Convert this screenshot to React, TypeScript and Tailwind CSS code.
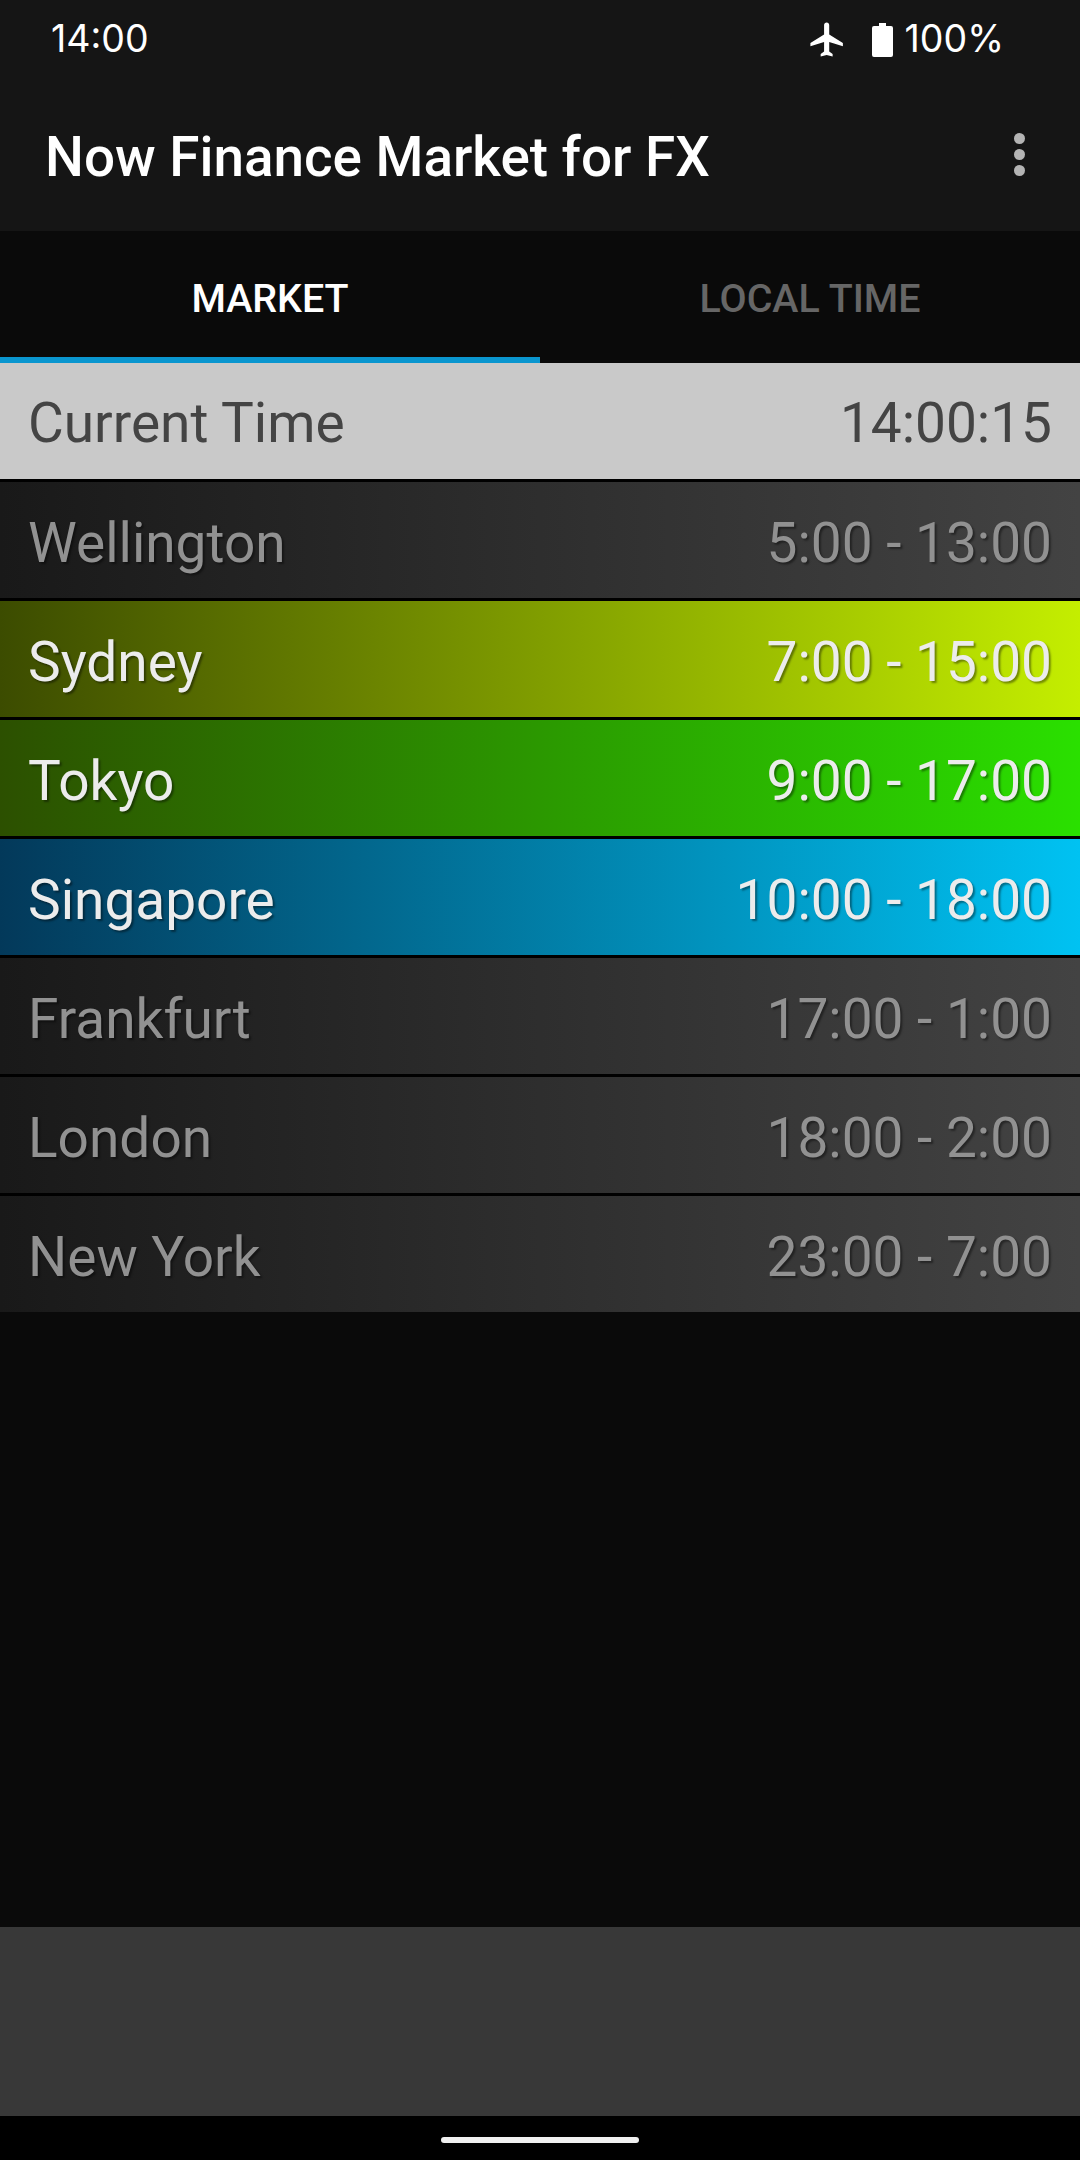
interface Market {
  city: string;
  hours: string;
  row: string;
  active: boolean;
}

const markets: Market[] = [
  { city: 'Wellington', hours: '5:00 - 13:00', row: 'bg-[linear-gradient(to_right,#191919,#434343)]', active: false },
  { city: 'Sydney', hours: '7:00 - 15:00', row: 'bg-[linear-gradient(to_right,#3c4c00,#c4ee00)]', active: true },
  { city: 'Tokyo', hours: '9:00 - 17:00', row: 'bg-[linear-gradient(to_right,#2c5000,#2ae000)]', active: true },
  { city: 'Singapore', hours: '10:00 - 18:00', row: 'bg-[linear-gradient(to_right,#03395a,#00c2f2)]', active: true },
  { city: 'Frankfurt', hours: '17:00 - 1:00', row: 'bg-[linear-gradient(to_right,#191919,#434343)]', active: false },
  { city: 'London', hours: '18:00 - 2:00', row: 'bg-[linear-gradient(to_right,#191919,#434343)]', active: false },
  { city: 'New York', hours: '23:00 - 7:00', row: 'bg-[linear-gradient(to_right,#191919,#434343)]', active: false },
];

function MarketRow({ market }: { market: Market }) {
  return (
    <div className={`flex h-[116px] items-center justify-between pl-[28px] pr-[28px] pt-[7px] text-[55px] [text-shadow:2px_2px_2px_rgba(0,0,0,0.4)] ${market.row} ${market.active ? 'text-[#ececec]' : 'text-[#919191]'}`}>
      <span>{market.city}</span>
      <span>{market.hours}</span>
    </div>
  );
}

function AirplaneIcon() {
  return (
    <svg viewBox="0 0 24 24" className="h-[41px] w-[41px] fill-white">
      <path d="M21 16v-2l-8-5V3.5c0-.83-.67-1.5-1.5-1.5S10 2.67 10 3.5V9l-8 5v2l8-2.5V19l-2 1.5V22l3.5-1 3.5 1v-1.5L13 19v-5.5l8 2.5z" />
    </svg>
  );
}

function BatteryIcon() {
  return (
    <svg viewBox="0 0 21 34" className="h-[34px] w-[21px] fill-white">
      <path d="M7 0h7v3h5a2 2 0 0 1 2 2v27a2 2 0 0 1-2 2H2a2 2 0 0 1-2-2V5a2 2 0 0 1 2-2h5z" />
    </svg>
  );
}

export default function App() {
  return (
    <div className="flex h-[2160px] w-[1080px] flex-col overflow-hidden bg-[#0a0a0a] font-['Roboto',sans-serif]">
      <div className="flex h-[231px] shrink-0 flex-col bg-[#151515] text-white">
        <div className="flex h-[77px] items-center justify-between pl-[51px] pr-[76px] pt-[2px] font-['Inter',sans-serif] text-[37.5px]">
          <span>14:00</span>
          <div className="flex items-center">
            <AirplaneIcon />
            <div className="ml-[24px] mr-[12px] flex">
              <BatteryIcon />
            </div>
            <span>100%</span>
          </div>
        </div>
        <div className="flex flex-1 items-center justify-between pl-[45px] pr-[55px] pt-[6px]">
          <span className="text-[54.8px] font-medium">Now Finance Market for FX</span>
          <div className="mb-[6px] flex flex-col gap-[5px]">
            <div className="h-[11px] w-[11px] rounded-full bg-[#b4b4b4]" />
            <div className="h-[11px] w-[11px] rounded-full bg-[#b4b4b4]" />
            <div className="h-[11px] w-[11px] rounded-full bg-[#b4b4b4]" />
          </div>
        </div>
      </div>

      <div className="flex h-[132px] shrink-0 bg-[#0a0a0a] text-[39.4px] font-medium">
        <div className="flex flex-1 items-center justify-center border-b-[6px] border-[#0a96cf] pt-[10px] text-white">MARKET</div>
        <div className="flex flex-1 items-center justify-center pt-[4px] text-[#666666]">LOCAL TIME</div>
      </div>

      <div className="flex shrink-0 flex-col gap-[3px] bg-black">
        <div className="flex h-[116px] items-center justify-between bg-[#c9c9c9] pl-[28px] pr-[28px] pt-[5px] text-[55px] text-[#444444]">
          <span>Current Time</span>
          <span>14:00:15</span>
        </div>
        {markets.map((market) => (
          <MarketRow key={market.city} market={market} />
        ))}
      </div>

      <div className="flex-1" />

      <div className="h-[189px] shrink-0 bg-[#383838]" />
      <div className="flex h-[44px] shrink-0 justify-center bg-black pt-[21px]">
        <div className="h-[6px] w-[198px] rounded-full bg-[#f0f0f0]" />
      </div>
    </div>
  );
}
